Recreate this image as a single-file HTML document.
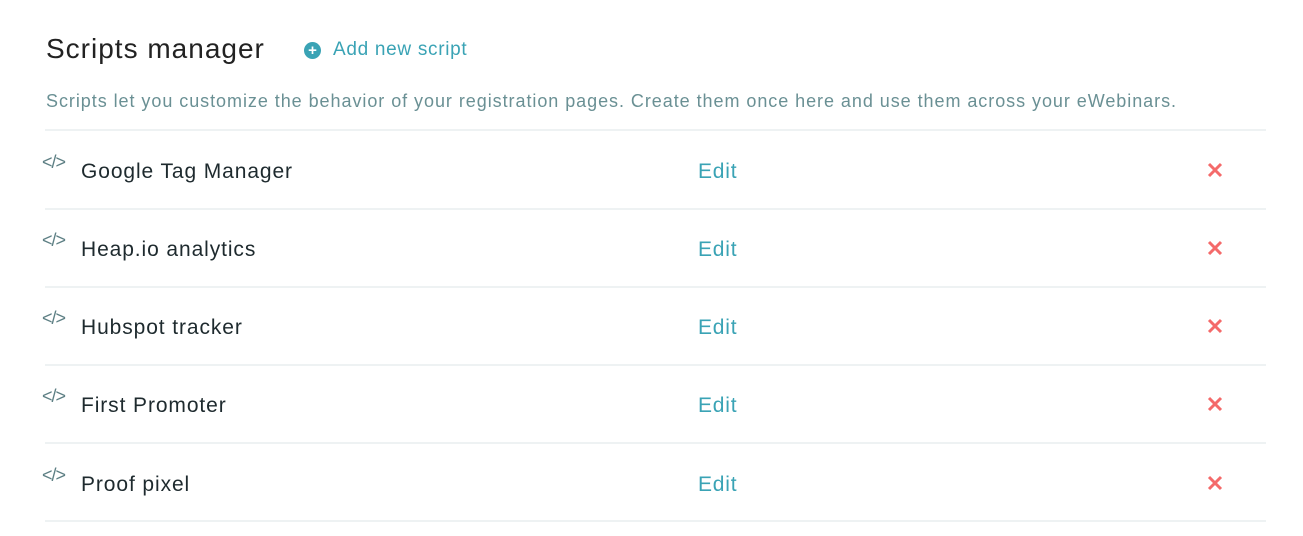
<!DOCTYPE html>
<html><head><style>
body{margin:0;background:#fff;font-family:"Liberation Sans",sans-serif;width:1303px;height:536px;overflow:hidden;position:relative}
.t{position:absolute;left:46px;top:33px;font-size:28px;color:#222;letter-spacing:1px}
.add{position:absolute;left:304px;top:39px;font-size:19px;color:#3aa3b5;display:flex;align-items:center;letter-spacing:0.7px}
.add .c{width:17px;height:17px;border-radius:50%;background:#3aa3b5;color:#fff;font-size:15px;line-height:17px;text-align:center;margin-right:12px;font-weight:bold;letter-spacing:0}
.sub{position:absolute;left:46px;top:91px;font-size:18px;color:#6a9094;letter-spacing:0.95px;white-space:nowrap}
.line{position:absolute;left:45px;width:1221px;height:2px;background:#eef2f3}
.row{position:absolute;left:42px;width:1230px;height:30px}
.row .ic{position:absolute;left:0;top:-6px;font-size:18px;color:#5d7f84;letter-spacing:-1px}
.row .n{position:absolute;left:39px;top:2px;font-size:21px;color:#1e2a2e;letter-spacing:0.9px}
.row .e{position:absolute;left:656px;top:2px;font-size:21px;color:#3aa3b5;letter-spacing:0.8px}
.row .x{position:absolute;left:1164px;top:3px}
</style></head><body>
<div class="t">Scripts manager</div>
<div class="add"><span class="c">+</span>Add new script</div>
<div class="sub">Scripts let you customize the behavior of your registration pages. Create them once here and use them across your eWebinars.</div>
<div class="line" style="top:129px"></div>
<div class="line" style="top:208px"></div>
<div class="line" style="top:286px"></div>
<div class="line" style="top:364px"></div>
<div class="line" style="top:442px"></div>
<div class="line" style="top:520px"></div>

<div class="row" style="top:158px"><span class="ic">&lt;/&gt;</span><span class="n">Google Tag Manager</span><span class="e">Edit</span><svg class="x" width="18" height="18" viewBox="0 0 18 18"><path d="M3 3L15 15M15 3L3 15" stroke="#f46a6a" stroke-width="3"/></svg></div>
<div class="row" style="top:236px"><span class="ic">&lt;/&gt;</span><span class="n">Heap.io analytics</span><span class="e">Edit</span><svg class="x" width="18" height="18" viewBox="0 0 18 18"><path d="M3 3L15 15M15 3L3 15" stroke="#f46a6a" stroke-width="3"/></svg></div>
<div class="row" style="top:314px"><span class="ic">&lt;/&gt;</span><span class="n">Hubspot tracker</span><span class="e">Edit</span><svg class="x" width="18" height="18" viewBox="0 0 18 18"><path d="M3 3L15 15M15 3L3 15" stroke="#f46a6a" stroke-width="3"/></svg></div>
<div class="row" style="top:392px"><span class="ic">&lt;/&gt;</span><span class="n">First Promoter</span><span class="e">Edit</span><svg class="x" width="18" height="18" viewBox="0 0 18 18"><path d="M3 3L15 15M15 3L3 15" stroke="#f46a6a" stroke-width="3"/></svg></div>
<div class="row" style="top:471px"><span class="ic">&lt;/&gt;</span><span class="n">Proof pixel</span><span class="e">Edit</span><svg class="x" width="18" height="18" viewBox="0 0 18 18"><path d="M3 3L15 15M15 3L3 15" stroke="#f46a6a" stroke-width="3"/></svg></div>
</body></html>
